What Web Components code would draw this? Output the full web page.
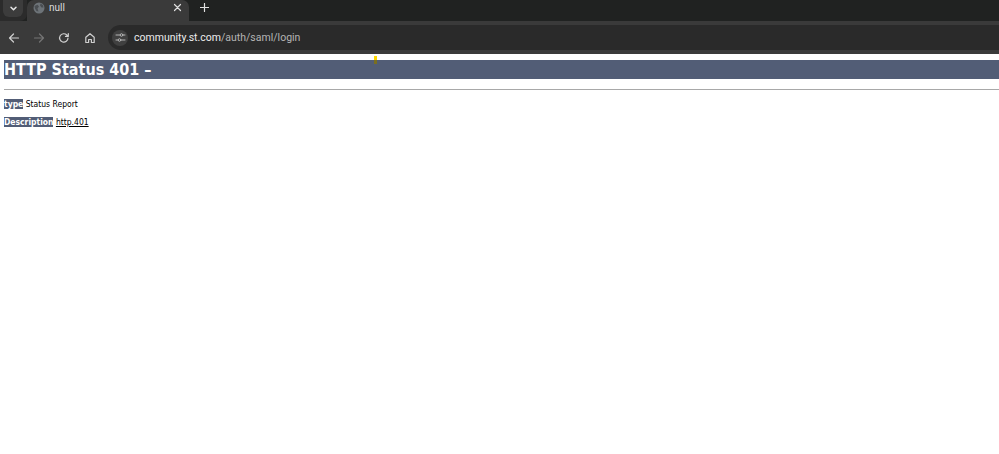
<!DOCTYPE html>
<html><head><meta charset="utf-8"><style>
html,body{margin:0;padding:0;background:#fff;height:454px;overflow:hidden}
</style></head><body>
<browser-chrome></browser-chrome>
<status-page></status-page>
<script>
class BrowserChrome extends HTMLElement{constructor(){super();this.attachShadow({mode:'open'}).innerHTML=`
<style>
:host{display:block;font-family:Roboto,"Noto Sans",sans-serif;color:#d0d0d0}
svg{display:block;fill:none;stroke:currentColor;stroke-width:1.2;stroke-linecap:round;stroke-linejoin:round}
.tabs{height:21px;background:#202221;display:flex;align-items:flex-start}
.left{width:27px;height:21px;background:#2b2b2b;display:flex;border-bottom-right-radius:7px}
.dd{width:20px;height:17px;margin-left:3px;background:#3c3c3c;border-radius:0 0 6px 6px;display:flex;align-items:center;justify-content:center;color:#e6e6e6}
.tab{width:162px;height:21px;background:#3a3a3a;border-radius:7px 7px 0 0;display:flex;align-items:center;box-sizing:border-box;padding:0 7px 6px 6px;gap:4px;font-size:10px;color:#dedede}
.tab span{flex:1}
.plus{margin-left:11px;height:15px;display:flex;align-items:center;color:#e0e0e0}
.tool{height:33px;background:#3a3a3a;display:flex;align-items:center;box-sizing:border-box;padding-left:7px}
.btn{width:14px;display:flex;justify-content:center}
.dim{color:#757575}
.url{flex:1;margin-left:11px;height:25px;background:#2a2a2a;border-radius:12.500px 0 0 12.500px;display:flex;align-items:center;font-size:10.5px;color:#b4b4b4}
.ic{width:16px;height:16px;margin-left:4px;border-radius:50%;background:#404040;display:flex;align-items:center;justify-content:center;margin-right:6px}
b{font-weight:400;color:#ececec}
</style>
<div class="tabs">
 <div class="left"><div class="dd"><svg width="9" height="9" viewBox="0 0 9 9"><path d="M2 3.200 4.500 5.800 7 3.200" stroke-width="1.500"/></svg></div></div>
 <div class="tab">
  <svg width="12" height="12" viewBox="0 0 12 12" style="stroke:none"><circle cx="6" cy="6" r="5.500" fill="#6d7378"/><path d="M1.500 4 4.500 2.800 6 4.500 4.500 6.500 5.500 9.500 3.500 9 2 6.500ZM7.500 1.500l2.500 1.500L10.500 5.500 8.500 5.500 7 3.500Z" fill="#4a4e52"/></svg>
  <span>null</span>
  <svg width="9" height="9" viewBox="0 0 9 9"><path d="M1.500 1.500 7.500 7.500M7.500 1.500 1.500 7.500"/></svg>
 </div>
 <div class="plus"><svg width="9" height="9" viewBox="0 0 9 9"><path d="M4.500 .5V8.500M.5 4.500H8.500"/></svg></div>
</div>
<div class="tool">
 <div class="btn"><svg width="12" height="12" viewBox="0 0 12 12"><path d="M10.500 6H1.500M5.500 2 1.500 6 5.500 10"/></svg></div>
 <div class="btn dim" style="margin-left:11px"><svg width="12" height="12" viewBox="0 0 12 12"><path d="M1.500 6H10.500M6.500 2 10.500 6 6.500 10"/></svg></div>
 <div class="btn" style="margin-left:11px"><svg width="12" height="12" viewBox="0 0 12 12"><path d="M10 6A4.200 4.200 0 1 1 8.800 3L10.300 4.400M10.300 1.500V4.400H7.500"/></svg></div>
 <div class="btn" style="margin-left:12px"><svg width="12" height="12" viewBox="0 0 12 12"><path d="M1.800 5.300 6 1.700 10.200 5.300V10.500H7.400V7.500H4.600V10.500H1.800Z"/></svg></div>
 <div class="url"><div class="ic"><svg width="11" height="11" viewBox="0 0 11 11"><path d="M1 3H5M8 3H10M1 8H3M6 8H10" stroke-width="1"/><circle cx="6.500" cy="3" r="1.300" stroke-width="1"/><circle cx="4.500" cy="8" r="1.300" stroke-width="1"/></svg></div><span><b>community.st.com</b>/auth/saml/login</span></div>
</div>`}}
customElements.define('browser-chrome',BrowserChrome);

class StatusPage extends HTMLElement{constructor(){super();this.attachShadow({mode:'open'}).innerHTML=`
<style>
:host{display:block;position:relative;font-family:"DejaVu Sans",sans-serif;font-stretch:condensed;color:#000;padding:6px 0 0 4px;font-size:8.5px}
h1{margin:0;height:19px;background:#525d76;color:#fff;font:700 16px/19px "DejaVu Sans",sans-serif;font-stretch:condensed;white-space:nowrap}
hr{height:1px;border:0;background:#a8a8a8;margin:10px 0 9px}
p{margin:0 0 7px;line-height:11px;height:11px;white-space:nowrap}
.l{background:#525d76;color:#fff;font-weight:700}
a{color:#000;text-decoration:underline}
.mark{position:absolute;left:374px;top:2px;width:3px;height:8px;background:linear-gradient(#ffd800 0 4px,#7a6f20 4px)}
</style>
<div class="mark"></div>
<h1>HTTP Status 401 –</h1>
<hr>
<p><span class="l">type</span> Status Report</p>
<p><span class="l">Description</span> <a>http.401</a></p>`}}
customElements.define('status-page',StatusPage);
</script></body></html>
